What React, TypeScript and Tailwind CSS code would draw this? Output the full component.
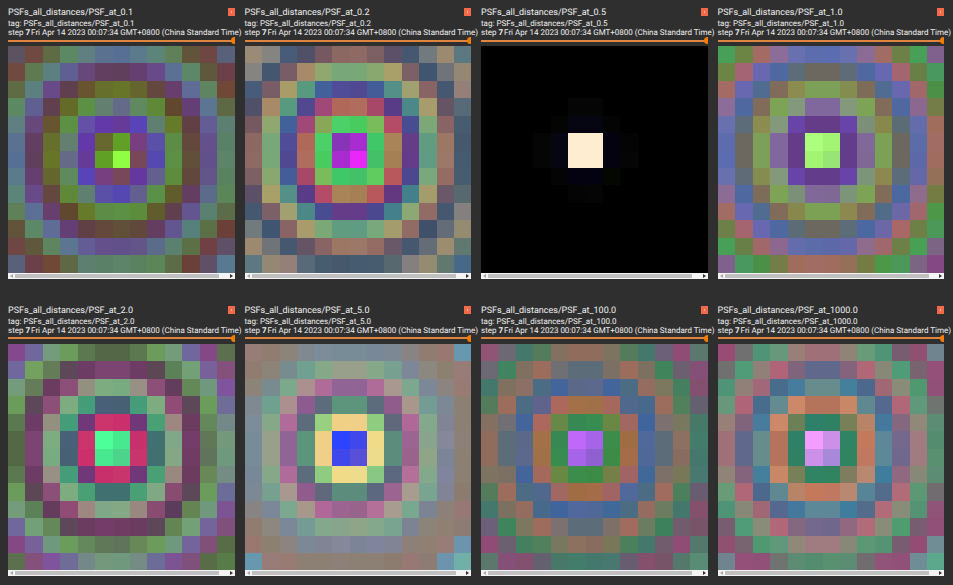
import React from "react";

// Each point spread function is symmetric about its main diagonal, so row n
// lists only the cells from column n onwards.
type Psf = { name: string; rows: string[] };

const SIZE = 13;

const psfs: Psf[] = [
  {
    name: "0.1",
    rows: [
      "5d5360 704a40 5f6b45 5d8864 5f7f80 5b7190 586f95 5b7a8c 5d8478 5f8058 62543a 6e4643 59607a",
      "5d7a50 5c8080 605f92 66487a 623f60 603f5c 653f70 684a88 5c7095 5c8868 60583c 6c4048",
      "684a88 60404f 66552e 66702c 667528 65662e 64483f 683e6c 5f6c95 5f8560 704838",
      "646a28 5c9044 627f70 646a88 5f8a60 5f8838 60482f 643f75 5c7590 5f6845",
      "6550a8 6338a8 663a98 5844b8 5f7f70 667a2c 604045 645c95 5c7f72",
      "66682f 60a025 783f80 5a50a8 5c8c45 64483c 64508a 5a8068",
      "90ff42 78485a 5548b0 5c9044 60503a 62508a 5d8468",
      "6538a0 63608f 5c8c3c 60483c 645588 5a8260",
      "5a9048 605c2c 643e60 5a6c8a 5c8558",
      "60404f 625590 5a8070 5c6c48",
      "58807a 5c7048 6a4038",
      "704045 5f5068",
      "587a90",
    ],
  },
  {
    name: "0.2",
    rows: [
      "9a8a78 858480 485c7a 505068 755860 8c6862 8f6a65 7c6064 5c5068 465870 717a7c 9c8a70 5c7880",
      "435870 785c66 a88a68 90a870 78a87a 78a878 88a870 a8a068 7c6068 405570 707478 948874",
      "a89c68 589a80 42609a 504c98 504890 445c98 549088 a0a070 886464 465870 948078",
      "524890 a04878 b06858 b06c5c a84868 583c88 4c8888 a89c6c 645464 586a78",
      "88a858 4cd068 48cc60 78bc5c b44c68 484c90 7ca878 886464 485c70",
      "8834b8 a82cd0 40c868 a88458 643c88 609c80 9c7864 48586c",
      "e828f8 44c068 a48054 643c8a 609c84 9c7868 465a70",
      "60cc60 b8585c 4c4890 78a87c 946c64 485c70",
      "643880 44808c a49c6c 685868 58686f",
      "8ca874 906c64 465870 848080",
      "3f5068 646c78 948c70",
      "9c8c70 607870",
      "48688a",
    ],
  },
  {
    name: "0.5",
    rows: [
      "000000 000000 000000 000000 000000 000000 000000 000000 000000 000000 000000 000000 000000",
      "000000 000000 000000 000000 000000 000000 000000 000000 000000 000000 000000 000000",
      "000000 000000 000000 000000 000000 000000 000000 000000 000000 000000 000000",
      "000000 000000 050505 050505 000000 000000 000000 000000 000000 000000",
      "040503 060512 060512 040404 000000 000000 000000 000000 000000",
      "ffedd2 ffedd2 040210 040404 000000 000000 000000 000000",
      "ffedd2 040210 040504 000000 000000 000000 000000",
      "040602 000000 000000 000000 000000 000000",
      "000000 000000 000000 000000 000000",
      "000000 000000 000000 000000",
      "000000 000000 000000",
      "000000 000000",
      "000000",
    ],
  },
  {
    name: "1.0",
    rows: [
      "48a058 6c8444 a46a64 8c6c98 6870b0 5c6cac 5c6cb0 6870b0 8c6c94 a06c64 6c8048 48a058 80608c",
      "a46474 6868b0 5068a0 5c6c78 6c6860 6c6860 5f6c78 5068a0 6868b0 a46470 688048 489860",
      "506c90 806c58 8c8c50 7ca058 7ca058 848c50 7c6c58 506c90 6868b0 a06868 4c9048",
      "7ca454 84987c 80689c 80689c 84987c 7ca454 806c58 5068a0 8c6890 747c48",
      "6844a8 643c88 643c88 6844a8 7c9078 88884c 5c6c74 646cac a06c5c",
      "acff7c a4f474 643c8c 806898 7ca054 6c6860 5c6ca8 a06c64",
      "98e474 643c8c 806894 7ca054 6c6860 5c68a8 a06c60",
      "6844a8 7c9478 8c8850 5c6c78 6468a8 947058",
      "7ca454 806c58 4c68a0 906c8c 747c44",
      "506c88 6c68a8 a0686c 4c9848",
      "a86868 6c8048 4c9858",
      "48a054 7c6484",
      "844884",
    ],
  },
  {
    name: "2.0",
    rows: [
      "84488c 70689c 749c7c 6c9c5c 5c7850 546848 546848 5c7850 6c9c5c 749c7c 70689c 844884 5c7050",
      "74a060 647c58 5c4858 6c3c64 7c4470 7c4470 6c3c64 5c4854 5c8058 74a078 786098 84507c",
      "6c3c60 8c5078 949080 7cac80 78ac80 989084 8c5078 643c5c 648858 70987c 80549c",
      "7cac80 449c78 486078 486074 449c78 7cac80 904c74 5c4858 6c9c5c 706c98",
      "703878 cc346c cc306c 703878 48a074 9c8880 6c3c60 64885c 748888",
      "4cff98 48e890 c8306c 407070 80a888 743c68 607858 74987c",
      "4cd48c c8346c 407070 84a884 703c64 60745c 70987c",
      "703878 48a074 988880 6c3c60 688858 748c84",
      "80a884 884c70 5c4858 6c9c5c 6c6c98",
      "5c3c5c 648454 70987c 7c5494",
      "74a078 74649c 80507c",
      "805078 586c48",
      "587c48",
    ],
  },
  {
    name: "5.0",
    rows: [
      "987c78 907c70 8c8478 808890 7c8c98 788c98 788c98 788898 7c8894 888484 907c70 987870 6898b0",
      "8c8478 788c90 70a090 84a888 98a08c 98a08c 84a888 78a090 7c8898 8c8880 8c8070 987c78",
      "7ca88c ac9090 b06c98 906494 906494 b06c98 a89890 7ca890 7c8898 8c8480 987c74",
      "8c5c90 5c6c7c 5c947c 5c947c 5c6c7c 905c8c a8988c 749c94 7c8894 8c8074",
      "98d080 f0d084 f0d088 90cc80 60687c b06898 84a88c 808494 8c8074",
      "2c44ff 4048ec f0dc88 5c8c7c 9c6490 88a48c 848898 8c8078",
      "5850d8 ecdc8c 5c8c7c 98648c 90a488 7c8498 8c8074",
      "88c884 5c6880 b47098 84a88c 80849c 8c8074",
      "9c6490 a89c90 78a490 808494 8c7c70",
      "78a890 7c8494 8c8078 987874",
      "8c8478 908074 8c7c74",
      "987c78 6c94ac",
      "70b0a8",
    ],
  },
  {
    name: "100.0",
    rows: [
      "905474 6c6874 44786c 547c5c 847060 906c5c 906c5c 7c7460 547c5c 44786c 6c6078 904c74 5c786c",
      "408460 807060 9c6c5c 707074 5c6c78 5c6c78 7c7064 9c6c5c 7c7060 40845c 6c6070 845078",
      "8c7068 4c6c84 44649c 5c6888 5c688c 44649c 4c6c84 946c60 7c7860 448060 845070",
      "60648c ac685c a47048 a07048 a4685c 50688c 48688c 9c6c5c 50805c 646070",
      "688848 388854 388c50 688844 a06860 40649c 7c7070 787860 487868",
      "c068f8 a864e8 3c8c4c a06c44 50689c 5c6c78 8c7060 447c6c",
      "9060d0 3c8c48 a46c48 506898 5c6c78 886c60 44786c",
      "748048 a06464 406898 7c7068 787858 487870",
      "50689c 4c6c84 a06c60 4c805c 685c70",
      "946c60 6c7c60 44786c 84506c",
      "3c805c 705c6c 785468",
      "904c74 54786c",
      "588c74",
    ],
  },
  {
    name: "1000.0",
    rows: [
      "984c74 707070 509478 68987c 988078 a07078 a07078 908478 689c78 509478 785c70 905070 708490",
      "509c78 908078 b06478 80647c 60688c 60688c 84647c b06878 888878 509c78 786470 945078",
      "a06878 486c8c 487c9c 688c8c 688c8c 44809c 4c688c a06874 888c78 509870 905078",
      "648c90 cc8868 b4745c b4745c c88868 608890 546890 b06878 60987c 707470",
      "6c8058 2f8068 308064 788058 b88468 44789c 846880 908878 5c8c74",
      "f49cff cc90e8 308464 c4785c 5c8898 74688c a07c80 548c70",
      "a888d8 308460 c07860 5c8898 70688c a07c80 589070",
      "807c60 b88870 407c9c 906880 888878 5c8c74",
      "588498 546c8c b06c78 5c9874 706c70",
      "b06c78 888c78 549474 905478",
      "509c70 785c70 905078",
      "944c74 708c94",
      "5ca88c",
    ],
  },
];

function Heatmap({ psf }: { psf: Psf }) {
  const upper = psf.rows.map((row) => row.split(" "));
  const cells: React.ReactNode[] = [];
  for (let y = 0; y < SIZE; y++) {
    for (let x = 0; x < SIZE; x++) {
      const a = Math.min(x, y);
      const b = Math.max(x, y);
      cells.push(
        <rect key={`${x}-${y}`} x={x} y={y} width={1} height={1} fill={`#${upper[a][b - a]}`} />,
      );
    }
  }
  return (
    <svg
      viewBox="0 0 13 13"
      shapeRendering="crispEdges"
      role="img"
      aria-label={`PSF at ${psf.name}`}
      className="block w-full"
    >
      {cells}
    </svg>
  );
}

function ScrollBar() {
  return (
    <div className="flex h-1.5 items-center bg-[#f4f4f4]">
      <button type="button" aria-label="Scroll left" className="flex h-full w-[7px] items-center justify-center">
        <svg viewBox="0 0 3 4" className="h-1 w-[3px] fill-[#a8a8a8]">
          <path d="M3 0v4L0 2z" />
        </svg>
      </button>
      <div className="flex h-1 flex-1">
        <div className="w-[96%] bg-[#c1c0c1]" />
      </div>
      <button type="button" aria-label="Scroll right" className="flex h-full w-[7px] items-center justify-center">
        <svg viewBox="0 0 3 4" className="h-1 w-[3px] fill-[#303030]">
          <path d="M0 0v4l3-2z" />
        </svg>
      </button>
    </div>
  );
}

function ImageCard({ psf }: { psf: Psf }) {
  const tag = `PSFs_all_distances/PSF_at_${psf.name}`;
  return (
    <article className="min-w-0">
      <header className="flex items-start justify-between">
        <div className="min-w-0 whitespace-nowrap text-[8px] leading-[9px]">
          <h2 className="text-[9px] leading-[11px]">{tag}</h2>
          <p>tag: {tag}</p>
          <p>
            step <b className="mr-px font-bold">7</b>
            Fri Apr 14 2023 00:07:34 GMT+0800 (China Standard Time)
          </p>
        </div>
        <button
          type="button"
          aria-label="Toggle actual size"
          className="-ml-2 flex h-2 w-[7px] shrink-0 items-center justify-center bg-[#f4694a]"
        >
          <span className="h-0.5 w-px bg-[#ffb8a0]" />
        </button>
      </header>
      <input
        type="range"
        aria-label={`Step for ${tag}`}
        min={0}
        max={7}
        defaultValue={7}
        className="block h-[7px] w-full appearance-none bg-transparent bg-[linear-gradient(#e0853f,#e0853f)] bg-[length:100%_2px] bg-center bg-no-repeat [&::-webkit-slider-thumb]:h-[7px] [&::-webkit-slider-thumb]:w-1 [&::-webkit-slider-thumb]:appearance-none [&::-webkit-slider-thumb]:rounded-l-full [&::-webkit-slider-thumb]:bg-[#f57c00]"
      />
      <div className="mt-0.5">
        <Heatmap psf={psf} />
        <ScrollBar />
      </div>
    </article>
  );
}

export default function App() {
  return (
    <main className="grid min-h-screen grid-cols-4 content-start gap-x-[10px] gap-y-[27px] bg-[#2f2f2f] pt-2 pr-[9px] pb-1 pl-2 font-[Roboto,sans-serif] text-[#f0f0f0] [text-rendering:geometricPrecision]">
      {psfs.map((psf) => (
        <ImageCard key={psf.name} psf={psf} />
      ))}
    </main>
  );
}
